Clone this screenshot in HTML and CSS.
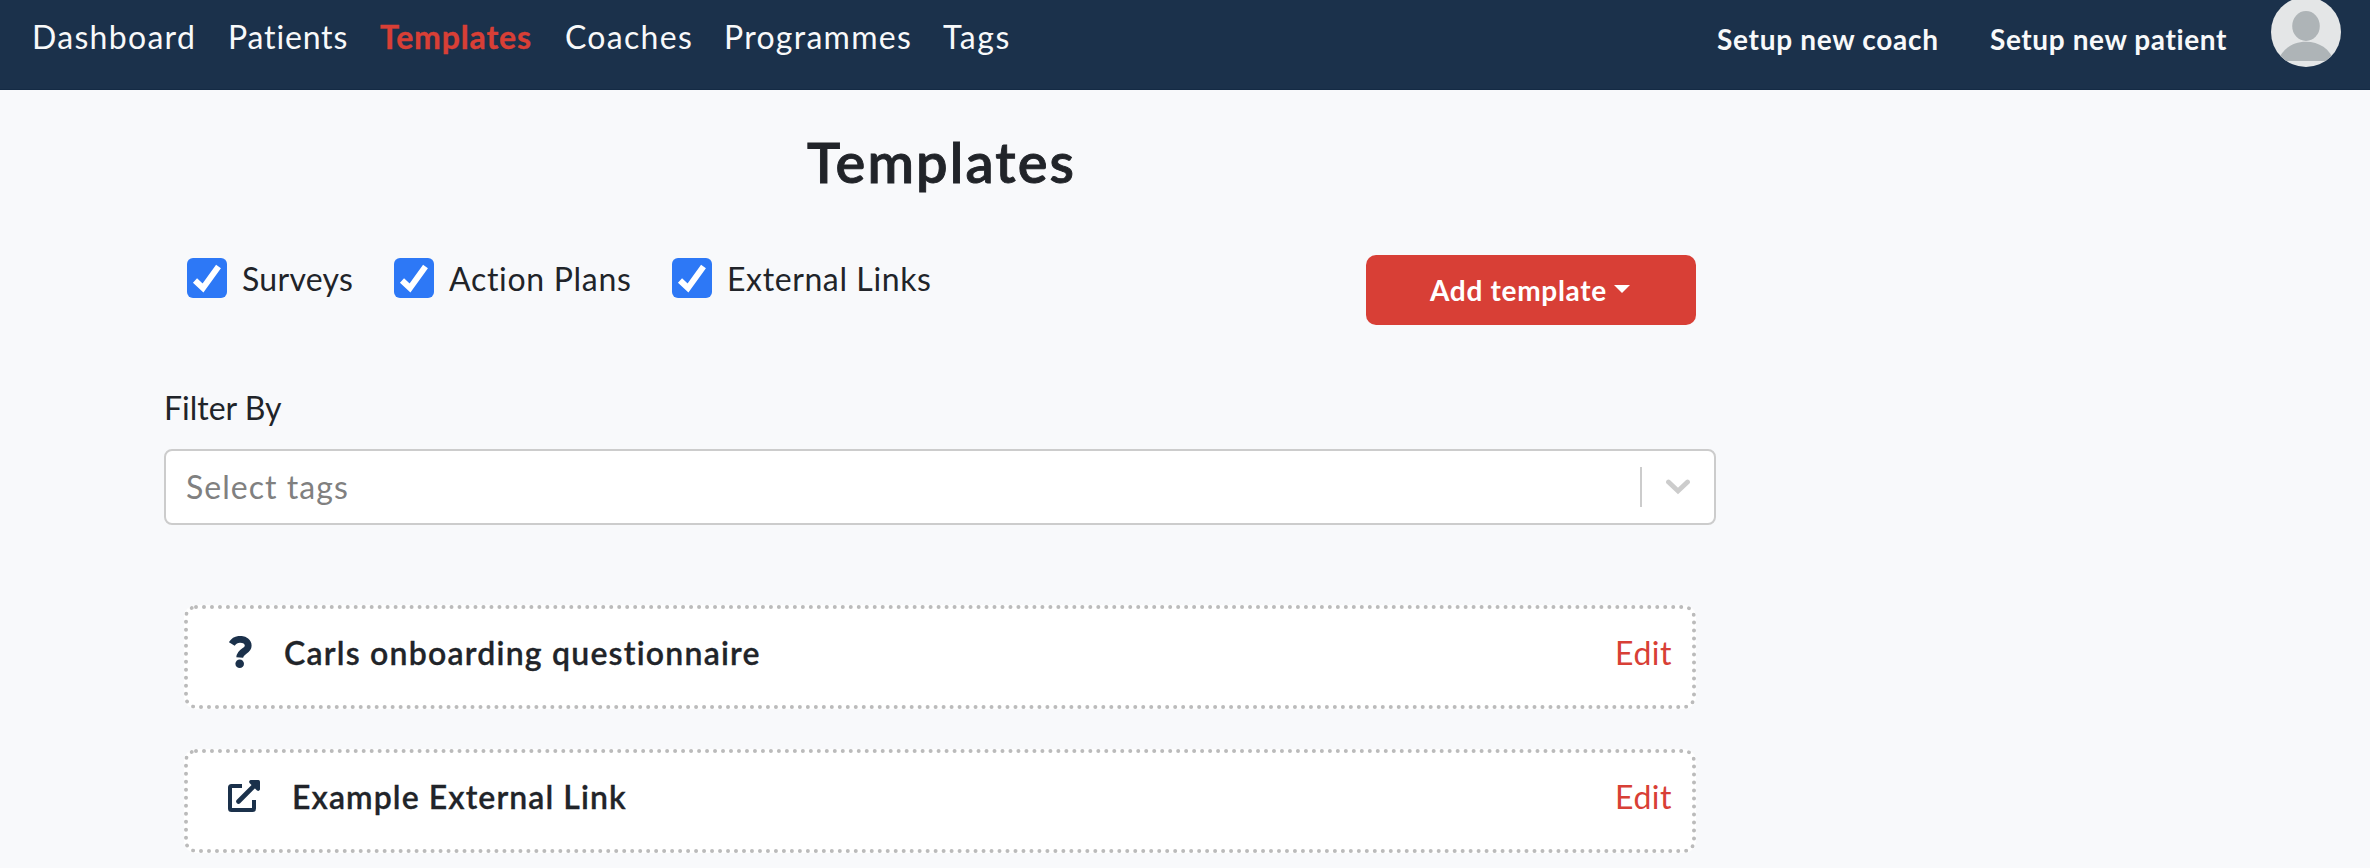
FILE: index.html
```
<!DOCTYPE html>
<html lang="en">
<head>
<meta charset="utf-8">
<title>Templates</title>
<link rel="stylesheet" href="styles.css">
</head>
<body>
<header class="navbar">
  <nav class="nav-main">
    <a class="ls-dashboard">Dashboard</a>
    <a class="ls-patients">Patients</a>
    <a class="ls-templates active">Templates</a>
    <a class="ls-coaches">Coaches</a>
    <a class="ls-programmes">Programmes</a>
    <a class="ls-tags">Tags</a>
  </nav>
  <div class="nav-side">
    <a class="setup-coach">Setup new coach</a>
    <a class="setup-patient">Setup new patient</a>
    <svg class="avatar" viewBox="0 0 70 70">
      <defs><clipPath id="disc"><circle cx="35" cy="35" r="35"/></clipPath></defs>
      <g clip-path="url(#disc)">
        <rect width="70" height="70" fill="#e4e6e7"/>
        <ellipse cx="35" cy="29" rx="13.800" ry="15" fill="#aeb4b7"/>
        <path d="M7 64C11 52 22 44.800 35 44.800S59 52 63 64Z" fill="#aeb4b7"/>
      </g>
    </svg>
  </div>
</header>
<main class="container">
  <h1 class="title">Templates</h1>
  <div class="toolbar">
    <div class="checks">
      <label class="check"><svg class="box" viewBox="0 0 40 40"><rect width="40" height="40" rx="6"/><path d="M8 22.500L16 30L31.500 8.500"/></svg><span class="ls-surveys">Surveys</span></label>
      <label class="check"><svg class="box" viewBox="0 0 40 40"><rect width="40" height="40" rx="6"/><path d="M8 22.500L16 30L31.500 8.500"/></svg><span class="ls-plans">Action Plans</span></label>
      <label class="check"><svg class="box" viewBox="0 0 40 40"><rect width="40" height="40" rx="6"/><path d="M8 22.500L16 30L31.500 8.500"/></svg><span class="ls-links">External Links</span></label>
    </div>
    <button class="add">Add template<span class="caret"></span></button>
  </div>
  <div class="filter-label">Filter By</div>
  <div class="select">
    <span class="placeholder">Select tags</span>
    <span class="separator"></span>
    <svg class="chevron" viewBox="0 0 24 16"><path d="M2.500 3L12 12L21.500 3"/></svg>
  </div>
  <section class="cards">
    <article class="card">
      <svg class="icon-question" viewBox="0 0 23 32"><path d="M2.800 8C5 4.500 7.500 3.300 11 3.300C16 3.300 19.200 6 19.200 9.700C19.200 15.500 11 14.800 10.700 21.500" fill="none" stroke="#1b314b" stroke-width="6.800"/><circle cx="10.700" cy="27.700" r="4.300" fill="#1b314b"/></svg>
      <h2 class="ls-carls">Carls onboarding questionnaire</h2>
      <a class="edit">Edit</a>
    </article>
    <article class="card">
      <svg class="icon-external" viewBox="0 0 32 32"><path d="M14 6H3.500Q2 6 2 7.500V28.500Q2 30 3.500 30H24.500Q26 30 26 28.500V20" fill="none" stroke="#1b314b" stroke-width="4"/><path d="M10.500 21.500L27 5" fill="none" stroke="#1b314b" stroke-width="4.600" stroke-linecap="round"/><path d="M22.500 0H30.500Q32 0 32 1.500V9.500Q31 11.700 29 10.500L21.500 3Q20.300 1 22.500 0Z" fill="#1b314b"/></svg>
      <h2 class="ls-example">Example External Link</h2>
      <a class="edit">Edit</a>
    </article>
  </section>
</main>
</body>
</html>
```
FILE: styles.css
```
* { box-sizing: border-box; }
body {
  margin: 0;
  height: 868px;
  overflow: hidden;
  background: #f8f9fb;
  color: #212429;
  font: 32px/48px Lato, sans-serif;
}
.navbar {
  display: flex;
  justify-content: space-between;
  align-items: flex-start;
  height: 90px;
  padding-left: 32px;
  padding-right: 29px;
  background: #1b314b;
  border-bottom: 1px solid #142a44;
  color: #f8f9fa;
}
.nav-main {
  display: grid;
  grid-template-columns: 196px 152px 185px 159px 219px auto;
  padding-top: 13px;
}
.active { color: #d83f36; font-weight: 700; -webkit-text-stroke: .4px; }
.ls-dashboard { letter-spacing: 1.3px; }
.ls-patients { letter-spacing: .84px; }
.ls-templates { letter-spacing: .84px; }
.ls-coaches { letter-spacing: 1.31px; }
.ls-programmes { letter-spacing: 1.28px; }
.ls-tags { letter-spacing: 1.6px; }
.nav-side {
  display: grid;
  grid-template-columns: 273px 281px 70px;
  font-size: 28px;
  font-weight: 700;
  line-height: 42px;
}
.nav-side a { padding-top: 18px; }
.setup-coach { letter-spacing: .7px; }
.setup-patient { letter-spacing: .6px; }
.avatar { width: 70px; height: 70px; margin-top: -3px; }
.container { width: 1552px; margin-left: 164px; }
.title {
  margin: 0;
  padding: 38px 0 0 3px;
  font-size: 56px;
  line-height: 67px;
  font-weight: 600;
  letter-spacing: 2.1px;
  text-align: center;
  -webkit-text-stroke: .9px;
}
.toolbar {
  display: flex;
  justify-content: space-between;
  align-items: flex-start;
  height: 129px;
  margin-top: 60px;
  padding: 0 20px 0 23px;
}
.checks { display: grid; grid-template-columns: 207px 278px auto; padding-top: 3px; }
.check { display: flex; align-items: flex-start; gap: 15px; height: 40px; }
.check span { margin-top: -3px; }
.box { width: 40px; height: 40px; fill: #2d78f6; }
.box path { fill: none; stroke: #fff; stroke-width: 6; }
.ls-surveys { letter-spacing: .29px; }
.ls-plans { letter-spacing: .7px; }
.ls-links { letter-spacing: .61px; }
.add {
  display: flex;
  width: 330px;
  height: 70px;
  padding: 14px 0 0 64px;
  border: 0;
  border-radius: 10px;
  background: #d83f36;
  color: #fff;
  font: 700 28px/42px Lato, sans-serif;
  letter-spacing: .7px;
}
.caret {
  margin: 16px 0 0 7px;
  border: 8.5px solid transparent;
  border-top-color: #fff;
  border-bottom: 0;
}
.filter-label { height: 65px; letter-spacing: 0; }
.select {
  display: flex;
  align-items: center;
  height: 76px;
  padding: 0 24px 0 20px;
  border: 2px solid #ccc;
  border-radius: 8px;
  background: #fff;
}
.placeholder { flex: 1; color: #808080; letter-spacing: 1.04px; }
.separator { width: 2px; height: 40px; background: #ccc; }
.chevron { width: 24px; height: 16px; margin-left: 24px; }
.chevron path { fill: none; stroke: #ccc; stroke-width: 4.8; stroke-linecap: round; }
.cards { display: grid; gap: 40px; padding: 80px 20px 0; }
.card {
  display: flex;
  align-items: flex-start;
  height: 104px;
  padding: 20px 20px 0 40px;
  border: 4px dotted #bbb;
  border-radius: 12px;
  background: #fff;
}
.card h2 { flex: 1; margin: 0; font-size: 32px; font-weight: 600; -webkit-text-stroke: .3px; }
.icon-question { width: 23px; height: 32px; margin: 7px 32px 0 1px; }
.icon-external { width: 32px; height: 32px; margin: 7px 32px 0 0; }
.ls-carls { letter-spacing: 1.21px; }
.ls-example { letter-spacing: 1.07px; }
.edit { color: #d83f36; letter-spacing: .5px; }
```
